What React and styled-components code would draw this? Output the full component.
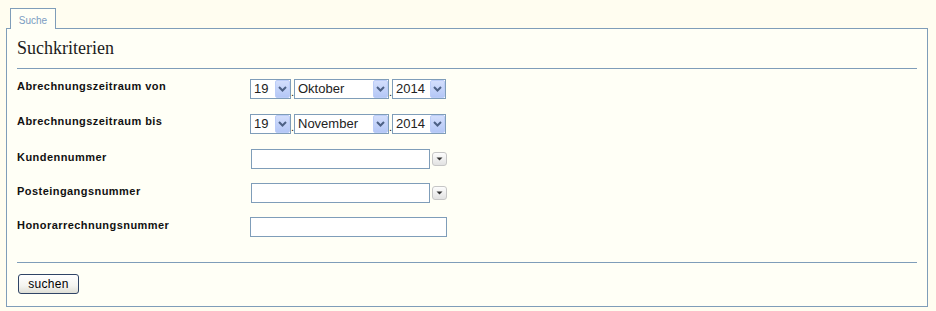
import React from "react";
import styled, { createGlobalStyle } from "styled-components";

const Global = createGlobalStyle`
  html, body { margin: 0; padding: 0; background: #fffdf0; }
  body { font-family: "Liberation Sans", Arial, sans-serif; }
`;

const Page = styled.div`
  padding: 8px 8px 5px 6px;
  width: 936px;
  box-sizing: border-box;
`;

const TabBar = styled.div`
  display: flex;
  padding-left: 4px;
`;

const Tab = styled.div`
  position: relative;
  z-index: 1;
  width: 46px;
  height: 21px;
  box-sizing: border-box;
  border: 1px solid #7f9db9;
  border-bottom: none;
  background: #fffff6;
  margin-bottom: -1px;
  display: flex;
  justify-content: center;
  padding-top: 6px;
  font-size: 10px;
  line-height: 12px;
  color: #7b9cc2;
`;

const Panel = styled.div`
  border: 1px solid #7f9db9;
  background: #fffff6;
  padding: 9px 10px 12px 10px;
  box-sizing: border-box;
  width: 922px;
`;

const Heading = styled.h2`
  margin: 0;
  padding-bottom: 10px;
  border-bottom: 1px solid #7f9db9;
  font-family: "Liberation Serif", "Times New Roman", serif;
  font-weight: normal;
  font-size: 18px;
  line-height: 20px;
  color: #1c1c1c;
`;

const Form = styled.div`
  display: grid;
  grid-template-columns: 233px 1fr;
  row-gap: 14px;
  margin-top: 10px;
`;

const Label = styled.div`
  font-weight: bold;
  font-size: 11px;
  letter-spacing: 0.45px;
  line-height: 14px;
  color: #111;
  padding-top: ${(p) => p.$offset || 0}px;
`;

const Field = styled.div`
  display: flex;
  align-items: flex-start;
  min-height: ${(p) => p.$h}px;
`;

const SelectBox = styled.div`
  display: flex;
  width: ${(p) => p.$w}px;
  height: 20px;
  box-sizing: border-box;
  border: 1px solid #7f9db9;
  background: #fff;
  font-size: 13px;
  color: #222;
`;

const SelectValue = styled.span`
  flex: 1;
  padding-left: 3px;
  line-height: 18px;
  white-space: nowrap;
  overflow: hidden;
`;

const SelectArrow = styled.span`
  flex: none;
  width: 15px;
  height: 18px;
  box-sizing: border-box;
  border: 1px solid #bccdf8;
  border-radius: 2px;
  background: linear-gradient(#d3defc, #b4c7f6);
  display: flex;
  align-items: center;
  justify-content: center;
`;

const Sep = styled.span`
  width: 3px;
  height: 20px;
  font-size: 11px;
  line-height: 26px;
  text-align: center;
  color: #111;
  overflow: hidden;
`;

const TextInput = styled.input`
  width: ${(p) => p.$w}px;
  height: 20px;
  margin: 0 0 0 ${(p) => p.$ml || 0}px;
  padding: 0 2px;
  box-sizing: border-box;
  border: 1px solid #7f9db9;
  background: #fff;
  font: 12px "Liberation Sans", Arial, sans-serif;
  outline: none;
`;

const ComboButton = styled.span`
  width: 15px;
  height: 14px;
  margin: 3px 0 0 2px;
  box-sizing: border-box;
  border: 1px solid #c6c6c6;
  border-radius: 3px;
  background: linear-gradient(#fdfdfd, #e2e2e2);
  display: flex;
  align-items: center;
  justify-content: center;
`;

const Divider = styled.div`
  margin-top: 25px;
  border-top: 1px solid #7f9db9;
`;

const Button = styled.button`
  margin: 11px 0 0 1px;
  width: 61px;
  height: 20px;
  padding: 0;
  box-sizing: border-box;
  border: 1px solid #2f4466;
  border-radius: 3px;
  background: linear-gradient(#ffffff 0%, #f4f4f0 60%, #deded6 100%);
  font: 12px "Liberation Sans", Arial, sans-serif;
  letter-spacing: 0.3px;
  color: #000;
  line-height: 18px;
`;

const Chevron = () => (
  <svg width="9" height="6" viewBox="0 0 9 6">
    <path d="M1 1 L4.5 4.5 L8 1" fill="none" stroke="#4d6185" strokeWidth="2" />
  </svg>
);

const Triangle = () => (
  <svg width="7" height="4" viewBox="0 0 7 4">
    <path d="M0.5 0.5 H6.5 L3.5 3.5 Z" fill="#333" />
  </svg>
);

const Select = ({ w, value }) => (
  <SelectBox $w={w}>
    <SelectValue>{value}</SelectValue>
    <SelectArrow>
      <Chevron />
    </SelectArrow>
  </SelectBox>
);

const DateField = ({ day, month, year }) => (
  <Field $h={21}>
    <Select w={41} value={day} />
    <Sep>.</Sep>
    <Select w={95} value={month} />
    <Sep>.</Sep>
    <Select w={54} value={year} />
  </Field>
);

export default function App() {
  return (
    <Page>
      <Global />
      <TabBar>
        <Tab>Suche</Tab>
      </TabBar>
      <Panel>
        <Heading>Suchkriterien</Heading>
        <Form>
          <Label>Abrechnungszeitraum von</Label>
          <DateField day="19" month="Oktober" year="2014" />
          <Label>Abrechnungszeitraum bis</Label>
          <DateField day="19" month="November" year="2014" />
          <Label $offset={1}>Kundennummer</Label>
          <Field $h={20}>
            <TextInput $w={179} $ml={1} />
            <ComboButton>
              <Triangle />
            </ComboButton>
          </Field>
          <Label $offset={1}>Posteingangsnummer</Label>
          <Field $h={20}>
            <TextInput $w={179} $ml={1} />
            <ComboButton>
              <Triangle />
            </ComboButton>
          </Field>
          <Label $offset={1}>Honorarrechnungsnummer</Label>
          <Field $h={20}>
            <TextInput $w={197} />
          </Field>
        </Form>
        <Divider />
        <Button>suchen</Button>
      </Panel>
    </Page>
  );
}
